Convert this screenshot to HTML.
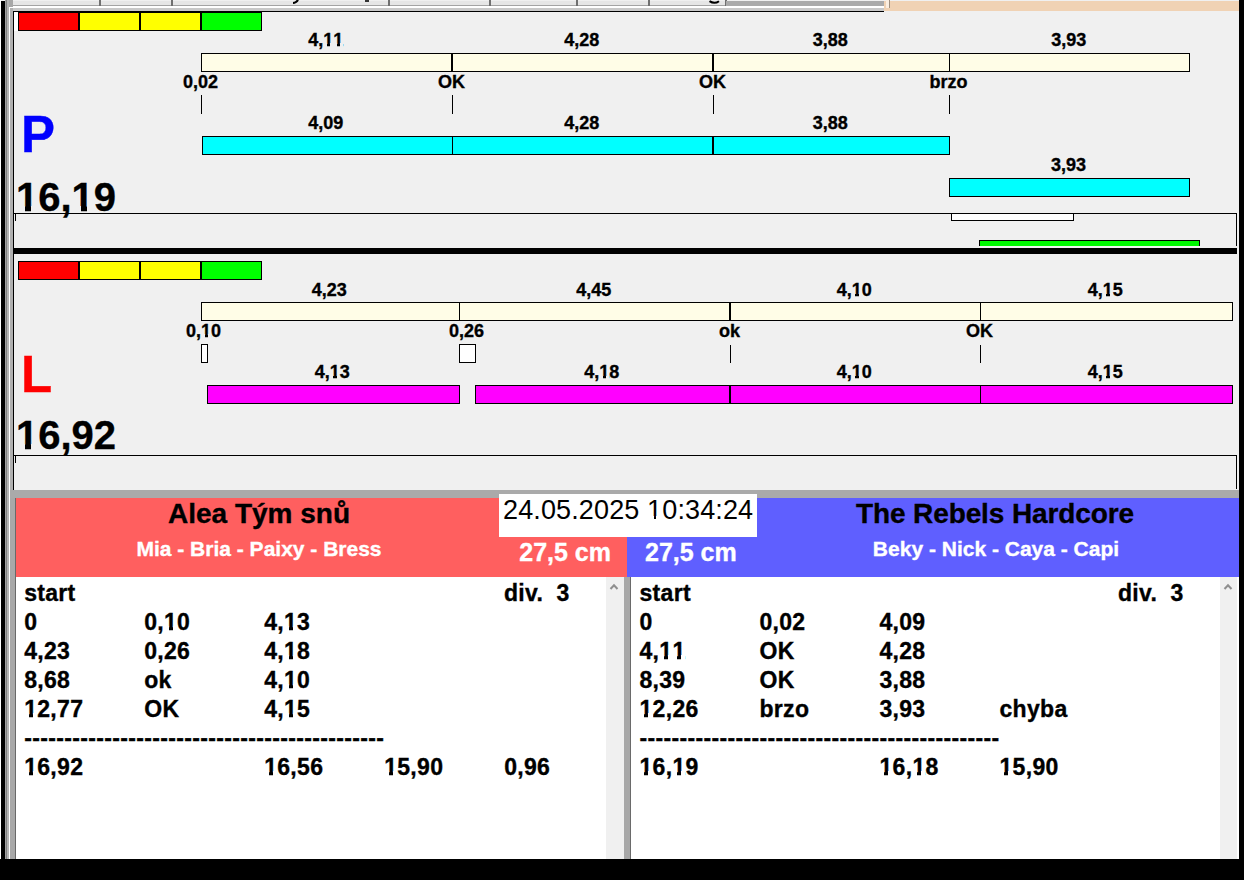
<!DOCTYPE html>
<html><head><meta charset="utf-8"><style>
html,body{margin:0;padding:0;}
body{width:1244px;height:880px;position:relative;overflow:hidden;background:#f0f0f0;font-family:"Liberation Sans",sans-serif;}
.a{position:absolute;}
.t{position:absolute;white-space:pre;}
.b{-webkit-text-stroke:0.35px currentColor;}
.ob,.or{position:relative;}
.ob::before,.ob::after,.or::before,.or::after{content:"";position:absolute;background:var(--bg);}
.ob::before{left:0;width:calc(0.2334em - 0.4px);top:calc(0.905em - 0.102em - 1.2px);height:calc(0.102em + 2.4px);}
.ob::after{left:calc(0.3706em + 0.4px);right:0;top:calc(0.905em - 0.102em - 1.2px);height:calc(0.102em + 2.4px);}
.or::before{left:0;width:calc(0.2515em - 0.2px);top:calc(0.905em - 0.0747em - 1px);height:calc(0.0747em + 2px);}
.or::after{left:calc(0.3398em + 0.2px);right:0;top:calc(0.905em - 0.0747em - 1px);height:calc(0.0747em + 2px);}
</style></head><body>
<div class="a" style="left:0px;top:0px;width:1px;height:880px;background:#ffffff;"></div>
<div class="a" style="left:1px;top:1px;width:4px;height:879px;background:#000;"></div>
<div class="a" style="left:5px;top:0px;width:1px;height:880px;background:#a0a0a0;"></div>
<div class="a" style="left:6px;top:0px;width:1px;height:880px;background:#808080;"></div>
<div class="a" style="left:7px;top:0px;width:2px;height:880px;background:#b4b4b4;"></div>
<div class="a" style="left:9px;top:7px;width:1px;height:873px;background:#ffffff;"></div>
<div class="a" style="left:9px;top:0px;width:1px;height:7px;background:#a8a8a8;"></div>
<div class="a" style="left:10px;top:0px;width:3px;height:7px;background:#a8a8a8;"></div>
<div class="a" style="left:10px;top:7px;width:3px;height:1px;background:#ffffff;"></div>
<div class="a" style="left:10px;top:8px;width:3px;height:482px;background:#b0b0b0;"></div>
<div class="a" style="left:13px;top:11px;width:1px;height:479px;background:#000;"></div>
<div class="a" style="left:1239px;top:0px;width:5px;height:880px;background:#000;"></div>
<div class="a" style="left:0px;top:859px;width:1244px;height:21px;background:#000;"></div>
<div class="a" style="left:13px;top:0px;width:713px;height:11px;background:#f0f0f0;"></div>
<div class="a" style="left:13px;top:1px;width:713px;height:4px;background:#e6e6e6;"></div>
<div class="a" style="left:13px;top:5px;width:713px;height:1px;background:#a4a4a4;"></div>
<div class="a" style="left:13px;top:6px;width:713px;height:2px;background:#ffffff;"></div>
<div class="a" style="left:13px;top:8px;width:713px;height:3px;background:#c8c8c8;"></div>
<div class="a" style="left:99px;top:0px;width:2px;height:6px;background:#707070;"></div>
<div class="a" style="left:171px;top:0px;width:2px;height:6px;background:#707070;"></div>
<div class="a" style="left:388px;top:0px;width:2px;height:6px;background:#707070;"></div>
<div class="a" style="left:489px;top:0px;width:2px;height:6px;background:#707070;"></div>
<div class="a" style="left:576px;top:0px;width:2px;height:6px;background:#707070;"></div>
<div class="a" style="left:648px;top:0px;width:2px;height:6px;background:#707070;"></div>
<div class="a" style="left:725px;top:0px;width:2px;height:6px;background:#707070;"></div>
<div class="a" style="left:726px;top:1px;width:158px;height:5px;background:#aaaaaa;"></div>
<div class="a" style="left:726px;top:6px;width:158px;height:2px;background:#ffffff;"></div>
<div class="a" style="left:726px;top:8px;width:158px;height:3px;background:#c8c8c8;"></div>
<div class="a" style="left:13px;top:11px;width:871px;height:1px;background:#000;"></div>
<div class="a" style="left:884px;top:1px;width:355px;height:10px;background:#f0d2b4;"></div>
<div class="a" style="left:886px;top:0px;width:3px;height:8px;background:#fbeee0;"></div>
<div class="a" style="left:889px;top:0px;width:1px;height:8px;background:#a09080;"></div>
<svg class="a" style="left:706px;top:0px" width="16" height="6"><path d="M3.5 1.2 Q8.5 4.5 13 1.2" stroke="#000" stroke-width="2" fill="none"/></svg>
<svg class="a" style="left:290px;top:0px" width="12" height="6"><path d="M3 3 Q6 3 8 0" stroke="#000" stroke-width="2.2" fill="none"/></svg>
<div class="a" style="left:365px;top:0px;width:4px;height:2px;background:#333;"></div>
<div class="a" style="left:18px;top:12px;width:61px;height:19px;background:#ff0000;border:1px solid #000;box-sizing:border-box;"></div>
<div class="a" style="left:79px;top:12px;width:61px;height:19px;background:#ffff00;border:1px solid #000;box-sizing:border-box;"></div>
<div class="a" style="left:140px;top:12px;width:61px;height:19px;background:#ffff00;border:1px solid #000;box-sizing:border-box;"></div>
<div class="a" style="left:201px;top:12px;width:61px;height:19px;background:#00ff00;border:1px solid #000;box-sizing:border-box;"></div>
<div class="a" style="left:14px;top:12px;width:4px;height:19px;background:#ffffff;"></div>
<div class="t b" style="left:25.80px;width:600px;text-align:center;top:30.76px;font-size:18px;line-height:18px;font-weight:700;color:#000;">4,<span class="ob" style="--bg:#f0f0f0">1</span><span class="ob" style="--bg:#f0f0f0">1</span></div>
<div class="t b" style="left:281.80px;width:600px;text-align:center;top:30.76px;font-size:18px;line-height:18px;font-weight:700;color:#000;">4,28</div>
<div class="t b" style="left:530.30px;width:600px;text-align:center;top:30.76px;font-size:18px;line-height:18px;font-weight:700;color:#000;">3,88</div>
<div class="t b" style="left:768.80px;width:600px;text-align:center;top:30.76px;font-size:18px;line-height:18px;font-weight:700;color:#000;">3,93</div>
<div class="a" style="left:201px;top:53px;width:989px;height:19px;background:#fffde7;border:1px solid #000;box-sizing:border-box;"></div>
<div class="a" style="left:451px;top:53px;width:2px;height:19px;background:#000;"></div>
<div class="a" style="left:712px;top:53px;width:2px;height:19px;background:#000;"></div>
<div class="a" style="left:949px;top:53px;width:1px;height:19px;background:#000;"></div>
<div class="t b" style="left:-99.50px;width:600px;text-align:center;top:72.76px;font-size:18px;line-height:18px;font-weight:700;color:#000;">0,02</div>
<div class="t b" style="left:151.50px;width:600px;text-align:center;top:72.76px;font-size:18px;line-height:18px;font-weight:700;color:#000;">OK</div>
<div class="t b" style="left:412.50px;width:600px;text-align:center;top:72.76px;font-size:18px;line-height:18px;font-weight:700;color:#000;">OK</div>
<div class="t b" style="left:648.50px;width:600px;text-align:center;top:72.76px;font-size:18px;line-height:18px;font-weight:700;color:#000;">brzo</div>
<div class="a" style="left:201px;top:95px;width:1px;height:19px;background:#000;"></div>
<div class="a" style="left:452px;top:95px;width:1px;height:19px;background:#000;"></div>
<div class="a" style="left:713px;top:95px;width:1px;height:19px;background:#000;"></div>
<div class="a" style="left:949px;top:95px;width:1px;height:19px;background:#000;"></div>
<div class="t b" style="left:25.80px;width:600px;text-align:center;top:114.26px;font-size:18px;line-height:18px;font-weight:700;color:#000;">4,09</div>
<div class="t b" style="left:281.80px;width:600px;text-align:center;top:114.26px;font-size:18px;line-height:18px;font-weight:700;color:#000;">4,28</div>
<div class="t b" style="left:530.30px;width:600px;text-align:center;top:114.26px;font-size:18px;line-height:18px;font-weight:700;color:#000;">3,88</div>
<div class="a" style="left:202px;top:136px;width:748px;height:19px;background:#00ffff;border:1px solid #000;box-sizing:border-box;"></div>
<div class="a" style="left:452px;top:136px;width:1px;height:19px;background:#000;"></div>
<div class="a" style="left:712px;top:136px;width:2px;height:19px;background:#000;"></div>
<div class="t b" style="left:768.50px;width:600px;text-align:center;top:156.26px;font-size:18px;line-height:18px;font-weight:700;color:#000;">3,93</div>
<div class="a" style="left:949px;top:178px;width:241px;height:19px;background:#00ffff;border:1px solid #000;box-sizing:border-box;"></div>
<div class="t b" style="left:21.00px;top:109.32px;font-size:51px;line-height:51px;font-weight:700;color:#0000ff;">P</div>
<div class="t b" style="left:16.00px;top:176.63px;font-size:40px;line-height:40px;font-weight:700;color:#000;"><span class="ob" style="--bg:#f0f0f0">1</span>6,<span class="ob" style="--bg:#f0f0f0">1</span>9</div>
<div class="a" style="left:14px;top:213px;width:1223px;height:1px;background:#000;"></div>
<div class="a" style="left:1236px;top:213px;width:1px;height:33px;background:#000;"></div>
<div class="a" style="left:15px;top:213px;width:1px;height:8px;background:#000;"></div>
<div class="a" style="left:951px;top:213px;width:123px;height:8px;background:#fff;border:1px solid #000;box-sizing:border-box;"></div>
<div class="a" style="left:979px;top:240px;width:221px;height:6px;background:#00f800;border:1px solid #000;box-sizing:border-box;border-bottom:none;"></div>
<div class="a" style="left:14px;top:248px;width:1223px;height:6px;background:#000;"></div>
<div class="a" style="left:18px;top:261px;width:61px;height:19px;background:#ff0000;border:1px solid #000;box-sizing:border-box;"></div>
<div class="a" style="left:79px;top:261px;width:61px;height:19px;background:#ffff00;border:1px solid #000;box-sizing:border-box;"></div>
<div class="a" style="left:140px;top:261px;width:61px;height:19px;background:#ffff00;border:1px solid #000;box-sizing:border-box;"></div>
<div class="a" style="left:201px;top:261px;width:61px;height:19px;background:#00ff00;border:1px solid #000;box-sizing:border-box;"></div>
<div class="t b" style="left:29.20px;width:600px;text-align:center;top:280.76px;font-size:18px;line-height:18px;font-weight:700;color:#000;">4,23</div>
<div class="t b" style="left:293.70px;width:600px;text-align:center;top:280.76px;font-size:18px;line-height:18px;font-weight:700;color:#000;">4,45</div>
<div class="t b" style="left:554.20px;width:600px;text-align:center;top:280.76px;font-size:18px;line-height:18px;font-weight:700;color:#000;">4,<span class="ob" style="--bg:#f0f0f0">1</span>0</div>
<div class="t b" style="left:805.20px;width:600px;text-align:center;top:280.76px;font-size:18px;line-height:18px;font-weight:700;color:#000;">4,<span class="ob" style="--bg:#f0f0f0">1</span>5</div>
<div class="a" style="left:201px;top:302px;width:1032px;height:19px;background:#fffde7;border:1px solid #000;box-sizing:border-box;"></div>
<div class="a" style="left:459px;top:302px;width:1px;height:19px;background:#000;"></div>
<div class="a" style="left:729px;top:302px;width:2px;height:19px;background:#000;"></div>
<div class="a" style="left:980px;top:302px;width:1px;height:19px;background:#000;"></div>
<div class="t b" style="left:-96.50px;width:600px;text-align:center;top:321.76px;font-size:18px;line-height:18px;font-weight:700;color:#000;">0,<span class="ob" style="--bg:#f0f0f0">1</span>0</div>
<div class="t b" style="left:166.50px;width:600px;text-align:center;top:321.76px;font-size:18px;line-height:18px;font-weight:700;color:#000;">0,26</div>
<div class="t b" style="left:429.50px;width:600px;text-align:center;top:321.76px;font-size:18px;line-height:18px;font-weight:700;color:#000;">ok</div>
<div class="t b" style="left:679.50px;width:600px;text-align:center;top:321.76px;font-size:18px;line-height:18px;font-weight:700;color:#000;">OK</div>
<div class="a" style="left:201px;top:344px;width:7px;height:19px;background:#fff;border:1px solid #000;box-sizing:border-box;"></div>
<div class="a" style="left:459px;top:344px;width:17px;height:19px;background:#fff;border:1px solid #000;box-sizing:border-box;"></div>
<div class="a" style="left:730px;top:345px;width:1px;height:18px;background:#000;"></div>
<div class="a" style="left:980px;top:345px;width:1px;height:18px;background:#000;"></div>
<div class="t b" style="left:32.20px;width:600px;text-align:center;top:363.26px;font-size:18px;line-height:18px;font-weight:700;color:#000;">4,<span class="ob" style="--bg:#f0f0f0">1</span>3</div>
<div class="t b" style="left:301.70px;width:600px;text-align:center;top:363.26px;font-size:18px;line-height:18px;font-weight:700;color:#000;">4,<span class="ob" style="--bg:#f0f0f0">1</span>8</div>
<div class="t b" style="left:554.20px;width:600px;text-align:center;top:363.26px;font-size:18px;line-height:18px;font-weight:700;color:#000;">4,<span class="ob" style="--bg:#f0f0f0">1</span>0</div>
<div class="t b" style="left:805.20px;width:600px;text-align:center;top:363.26px;font-size:18px;line-height:18px;font-weight:700;color:#000;">4,<span class="ob" style="--bg:#f0f0f0">1</span>5</div>
<div class="a" style="left:207px;top:385px;width:253px;height:19px;background:#ff00ff;border:1px solid #000;box-sizing:border-box;"></div>
<div class="a" style="left:475px;top:385px;width:758px;height:19px;background:#ff00ff;border:1px solid #000;box-sizing:border-box;"></div>
<div class="a" style="left:729px;top:385px;width:2px;height:19px;background:#000;"></div>
<div class="a" style="left:980px;top:385px;width:1px;height:19px;background:#000;"></div>
<div class="t b" style="left:21.00px;top:348.62px;font-size:51px;line-height:51px;font-weight:700;color:#ff0000;">L</div>
<div class="t b" style="left:16.00px;top:415.23px;font-size:40px;line-height:40px;font-weight:700;color:#000;"><span class="ob" style="--bg:#f0f0f0">1</span>6,92</div>
<div class="a" style="left:14px;top:455px;width:1223px;height:1px;background:#000;"></div>
<div class="a" style="left:1236px;top:455px;width:1px;height:34px;background:#000;"></div>
<div class="a" style="left:15px;top:455px;width:1px;height:8px;background:#000;"></div>
<div class="a" style="left:10px;top:490px;width:1229px;height:8px;background:#aaaaaa;"></div>
<div class="a" style="left:10px;top:498px;width:6px;height:361px;background:#a8a8a8;"></div>
<div class="a" style="left:15px;top:498px;width:1px;height:361px;background:#696969;"></div>
<div class="a" style="left:16px;top:498px;width:611px;height:79px;background:#ff5f5f;"></div>
<div class="a" style="left:627px;top:498px;width:612px;height:79px;background:#5f5fff;"></div>
<div class="a" style="left:16px;top:577px;width:608px;height:282px;background:#ffffff;"></div>
<div class="a" style="left:606px;top:577px;width:18px;height:282px;background:#f0f0f0;"></div>
<div class="a" style="left:624px;top:577px;width:7px;height:282px;background:#a8a8a8;"></div>
<div class="a" style="left:630px;top:577px;width:1px;height:282px;background:#6a6a6a;"></div>
<div class="a" style="left:631px;top:577px;width:608px;height:282px;background:#ffffff;"></div>
<div class="a" style="left:1220px;top:577px;width:17px;height:282px;background:#f0f0f0;"></div>
<div class="a" style="left:499px;top:494px;width:258px;height:43px;background:#ffffff;"></div>
<div class="t" style="left:503.00px;top:496.94px;font-size:27px;line-height:27px;font-weight:400;color:#000;letter-spacing:0.13px;">24.05.2025 <span class="or" style="--bg:#ffffff">1</span>0:34:24</div>
<div class="t b" style="left:-41.00px;width:600px;text-align:center;top:500.09px;font-size:28px;line-height:28px;font-weight:700;color:#000;">Alea Tým snů</div>
<div class="t b" style="left:-41.00px;width:600px;text-align:center;top:538.02px;font-size:21px;line-height:21px;font-weight:700;color:#ffffff;">Mia - Bria - Paixy - Bress</div>
<div class="t b" style="left:695.00px;width:600px;text-align:center;top:500.09px;font-size:28px;line-height:28px;font-weight:700;color:#000;letter-spacing:-0.1px;">The Rebels Hardcore</div>
<div class="t b" style="left:696.00px;width:600px;text-align:center;top:538.02px;font-size:21px;line-height:21px;font-weight:700;color:#ffffff;">Beky - Nick - Caya - Capi</div>
<div class="t b" style="left:11.00px;width:600px;text-align:right;top:539.63px;font-size:25px;line-height:25px;font-weight:700;color:#ffffff;">27,5 cm</div>
<div class="t b" style="left:645.00px;top:539.63px;font-size:25px;line-height:25px;font-weight:700;color:#ffffff;">27,5 cm</div>
<div class="t b" style="left:24.20px;top:581.53px;font-size:23px;line-height:23px;font-weight:700;color:#000;letter-spacing:0.3px;">start</div>
<div class="t b" style="left:24.20px;top:610.83px;font-size:23px;line-height:23px;font-weight:700;color:#000;letter-spacing:0.3px;">0</div>
<div class="t b" style="left:144.20px;top:610.83px;font-size:23px;line-height:23px;font-weight:700;color:#000;letter-spacing:0.3px;">0,<span class="ob" style="--bg:#ffffff">1</span>0</div>
<div class="t b" style="left:264.20px;top:610.83px;font-size:23px;line-height:23px;font-weight:700;color:#000;letter-spacing:0.3px;">4,<span class="ob" style="--bg:#ffffff">1</span>3</div>
<div class="t b" style="left:24.20px;top:639.83px;font-size:23px;line-height:23px;font-weight:700;color:#000;letter-spacing:0.3px;">4,23</div>
<div class="t b" style="left:144.20px;top:639.83px;font-size:23px;line-height:23px;font-weight:700;color:#000;letter-spacing:0.3px;">0,26</div>
<div class="t b" style="left:264.20px;top:639.83px;font-size:23px;line-height:23px;font-weight:700;color:#000;letter-spacing:0.3px;">4,<span class="ob" style="--bg:#ffffff">1</span>8</div>
<div class="t b" style="left:24.20px;top:668.83px;font-size:23px;line-height:23px;font-weight:700;color:#000;letter-spacing:0.3px;">8,68</div>
<div class="t b" style="left:144.20px;top:668.83px;font-size:23px;line-height:23px;font-weight:700;color:#000;letter-spacing:0.3px;">ok</div>
<div class="t b" style="left:264.20px;top:668.83px;font-size:23px;line-height:23px;font-weight:700;color:#000;letter-spacing:0.3px;">4,<span class="ob" style="--bg:#ffffff">1</span>0</div>
<div class="t b" style="left:24.20px;top:697.83px;font-size:23px;line-height:23px;font-weight:700;color:#000;letter-spacing:0.3px;"><span class="ob" style="--bg:#ffffff">1</span>2,77</div>
<div class="t b" style="left:144.20px;top:697.83px;font-size:23px;line-height:23px;font-weight:700;color:#000;letter-spacing:0.3px;">OK</div>
<div class="t b" style="left:264.20px;top:697.83px;font-size:23px;line-height:23px;font-weight:700;color:#000;letter-spacing:0.3px;">4,<span class="ob" style="--bg:#ffffff">1</span>5</div>
<div class="t b" style="left:24.20px;top:755.83px;font-size:23px;line-height:23px;font-weight:700;color:#000;letter-spacing:0.3px;"><span class="ob" style="--bg:#ffffff">1</span>6,92</div>
<div class="t b" style="left:264.20px;top:755.83px;font-size:23px;line-height:23px;font-weight:700;color:#000;letter-spacing:0.3px;"><span class="ob" style="--bg:#ffffff">1</span>6,56</div>
<div class="t b" style="left:384.20px;top:755.83px;font-size:23px;line-height:23px;font-weight:700;color:#000;letter-spacing:0.3px;"><span class="ob" style="--bg:#ffffff">1</span>5,90</div>
<div class="t b" style="left:504.20px;top:755.83px;font-size:23px;line-height:23px;font-weight:700;color:#000;letter-spacing:0.3px;">0,96</div>
<div class="t b" style="left:504.00px;top:581.53px;font-size:23px;line-height:23px;font-weight:700;color:#000;letter-spacing:0.3px;">div.  3</div>
<div class="t b" style="left:24.20px;top:727.13px;font-size:23px;line-height:23px;font-weight:700;color:#000;letter-spacing:0.34px;">---------------------------------------------</div>
<div class="t b" style="left:639.50px;top:581.53px;font-size:23px;line-height:23px;font-weight:700;color:#000;letter-spacing:0.3px;">start</div>
<div class="t b" style="left:639.50px;top:610.83px;font-size:23px;line-height:23px;font-weight:700;color:#000;letter-spacing:0.3px;">0</div>
<div class="t b" style="left:759.50px;top:610.83px;font-size:23px;line-height:23px;font-weight:700;color:#000;letter-spacing:0.3px;">0,02</div>
<div class="t b" style="left:879.50px;top:610.83px;font-size:23px;line-height:23px;font-weight:700;color:#000;letter-spacing:0.3px;">4,09</div>
<div class="t b" style="left:639.50px;top:639.83px;font-size:23px;line-height:23px;font-weight:700;color:#000;letter-spacing:0.3px;">4,<span class="ob" style="--bg:#ffffff">1</span><span class="ob" style="--bg:#ffffff">1</span></div>
<div class="t b" style="left:759.50px;top:639.83px;font-size:23px;line-height:23px;font-weight:700;color:#000;letter-spacing:0.3px;">OK</div>
<div class="t b" style="left:879.50px;top:639.83px;font-size:23px;line-height:23px;font-weight:700;color:#000;letter-spacing:0.3px;">4,28</div>
<div class="t b" style="left:639.50px;top:668.83px;font-size:23px;line-height:23px;font-weight:700;color:#000;letter-spacing:0.3px;">8,39</div>
<div class="t b" style="left:759.50px;top:668.83px;font-size:23px;line-height:23px;font-weight:700;color:#000;letter-spacing:0.3px;">OK</div>
<div class="t b" style="left:879.50px;top:668.83px;font-size:23px;line-height:23px;font-weight:700;color:#000;letter-spacing:0.3px;">3,88</div>
<div class="t b" style="left:639.50px;top:697.83px;font-size:23px;line-height:23px;font-weight:700;color:#000;letter-spacing:0.3px;"><span class="ob" style="--bg:#ffffff">1</span>2,26</div>
<div class="t b" style="left:759.50px;top:697.83px;font-size:23px;line-height:23px;font-weight:700;color:#000;letter-spacing:0.3px;">brzo</div>
<div class="t b" style="left:879.50px;top:697.83px;font-size:23px;line-height:23px;font-weight:700;color:#000;letter-spacing:0.3px;">3,93</div>
<div class="t b" style="left:999.50px;top:697.83px;font-size:23px;line-height:23px;font-weight:700;color:#000;letter-spacing:0.3px;">chyba</div>
<div class="t b" style="left:639.50px;top:755.83px;font-size:23px;line-height:23px;font-weight:700;color:#000;letter-spacing:0.3px;"><span class="ob" style="--bg:#ffffff">1</span>6,<span class="ob" style="--bg:#ffffff">1</span>9</div>
<div class="t b" style="left:879.50px;top:755.83px;font-size:23px;line-height:23px;font-weight:700;color:#000;letter-spacing:0.3px;"><span class="ob" style="--bg:#ffffff">1</span>6,<span class="ob" style="--bg:#ffffff">1</span>8</div>
<div class="t b" style="left:999.50px;top:755.83px;font-size:23px;line-height:23px;font-weight:700;color:#000;letter-spacing:0.3px;"><span class="ob" style="--bg:#ffffff">1</span>5,90</div>
<div class="t b" style="left:1118.00px;top:581.53px;font-size:23px;line-height:23px;font-weight:700;color:#000;letter-spacing:0.3px;">div.  3</div>
<div class="t b" style="left:639.50px;top:727.13px;font-size:23px;line-height:23px;font-weight:700;color:#000;letter-spacing:0.34px;">---------------------------------------------</div>
<svg class="a" style="left:608px;top:581px" width="12" height="10"><path d="M2.5 8 L6 4.2 L9.5 8" stroke="#8f8f8f" stroke-width="2" fill="none"/></svg>
<svg class="a" style="left:1222px;top:581px" width="12" height="10"><path d="M2.5 8 L6 4.2 L9.5 8" stroke="#8f8f8f" stroke-width="2" fill="none"/></svg>
</body></html>
